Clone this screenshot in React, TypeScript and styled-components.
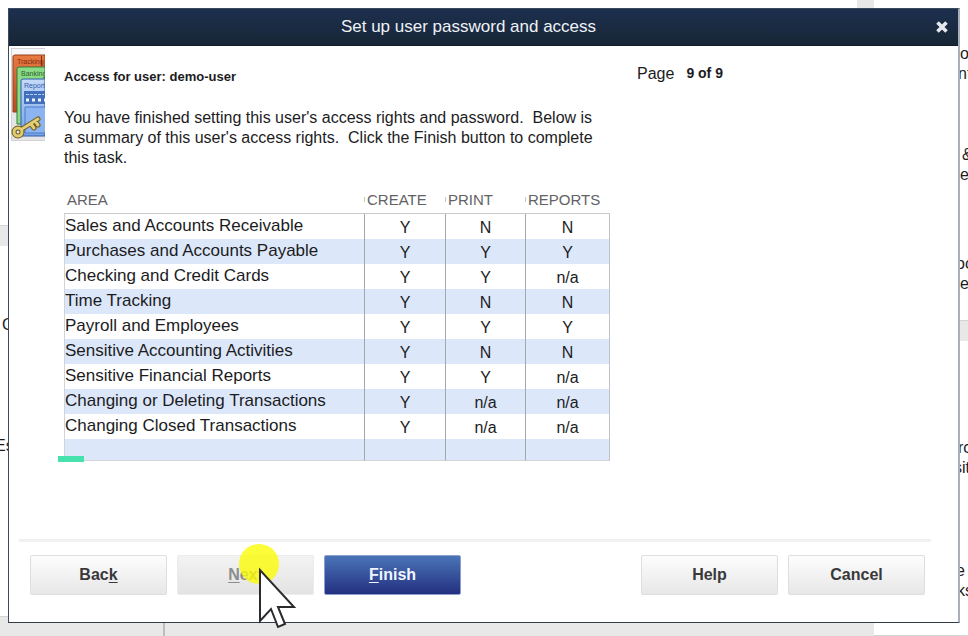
import React from "react";
import styled, { createGlobalStyle, css } from "styled-components";

const GlobalStyle = createGlobalStyle`
  *, *::before, *::after { box-sizing: border-box; }
  body {
    margin: 0;
    background: #fff;
    color: #1c1c1e;
    font-family: "Liberation Sans", Arial, sans-serif;
    font-size: 16px;
    overflow: hidden;
  }
`;

const Screen = styled.div`
  display: grid;
  grid-template: minmax(100vh, auto) / minmax(0, 1fr);
`;

const Backdrop = styled.div`
  grid-area: 1 / 1;
  display: grid;
  grid-template-columns: minmax(0, 1fr) 94px;
  column-gap: 17px;
  height: 100vh;
  overflow: hidden;
  background: #e8e8e8;
`;

const BackdropColumn = styled.div`
  display: flex;
  flex-direction: column;
  gap: 20px;
  min-height: 0;
  overflow: hidden;
`;

const Panel = styled.section<{ $height?: number; $edge?: "left" | "right" }>`
  flex: ${(p) => (p.$height ? `0 0 ${p.$height}px` : "1")};
  border-bottom: 1px solid #d4d4d4;
  background: #fff;
  overflow: hidden;
  display: flex;
  flex-direction: column;
  white-space: nowrap;
  line-height: 20px;
  padding-left: ${(p) => (p.$edge === "right" ? 85 : 0)}px;
`;

const Snippet = styled.p<{ $top: number; $indent?: number }>`
  margin: ${(p) => p.$top}px 0 0;
  text-indent: ${(p) => p.$indent ?? 0}px;
`;

const TaskStrip = styled.div`
  flex: 0 0 19px;
  margin-top: -20px;
  display: grid;
  grid-template-columns: 165px 1fr;

  & > span:first-child { border-right: 2px solid #bdbdbd; }
`;

const Dialog = styled.main`
  grid-area: 1 / 1;
  z-index: 1;
  display: flex;
  flex-direction: column;
  margin: 8px 8px 13px 8px;
  border: 1px solid #3d4a5e;
  border-right: 2px solid #a9afb9;
  border-bottom-color: #343b4b;
  background: #fff;
`;

const TitleBar = styled.header`
  display: grid;
  grid-template-columns: 36px 1fr 36px;
  align-items: center;
  height: 37px;
  background: linear-gradient(#1c2f4e, #182636);
  border-bottom: 1px solid #101c2b;
  color: #eef2f7;
`;

const Title = styled.h1`
  grid-column: 2;
  margin: 0;
  padding-right: 30px;
  text-align: center;
  font-size: 17px;
  font-weight: 400;
`;

const CloseButton = styled.button`
  display: grid;
  place-items: center;
  width: 36px;
  height: 32px;
  padding: 0 0 0 4px;
  border: 0;
  background: none;
  color: #e6eaf0;
`;

const Body = styled.div`
  flex: 1;
  display: grid;
  grid-template-columns: 36px 546px minmax(0, 1fr);
  column-gap: 19px;
`;

const Illustration = styled.svg`
  display: block;
  margin: 2px 0 0 2px;
`;

const Content = styled.section`
  padding-top: 21px;
`;

const UserHeading = styled.h2`
  margin: 0 0 21px;
  font-size: 13px;
  line-height: 20px;
`;

const Summary = styled.p`
  margin: 0 -6px 21px 0;
  line-height: 20px;
  white-space: pre-line;
`;

const PageCount = styled.p`
  display: flex;
  gap: 12px;
  margin: 17px 0 0 8px;
  line-height: 22px;

  strong { font-size: 14px; line-height: 20px; }
`;

const Table = styled.table`
  width: 100%;
  table-layout: fixed;
  border-collapse: separate;
  border-spacing: 0;
  font-size: 17px;
`;

const Th = styled.th<{ $width?: number }>`
  width: ${(p) => (p.$width ? `${p.$width}px` : "auto")};
  height: 25px;
  padding: 2px 0 5px 3px;
  border-bottom: 1px solid #c9c9c9;
  color: #626266;
  font-size: 15px;
  font-weight: 400;
  line-height: 16px;
  text-align: left;
  background: ${(p) =>
    p.$width
      ? "linear-gradient(#c8c8c8, #c8c8c8) 0 8px / 1px 5px no-repeat"
      : "none"};
`;

const Tr = styled.tr`
  height: 25px;
  &:nth-child(even) { background: #dce8fa; }
  &:last-child { height: 22px; }
  &:last-child td { border-bottom: 1px solid #d3d3d8; }
`;

const cell = css`
  padding: 0 1px;
  border-left: 1px solid #a3a7ae;
  line-height: 20px;
`;

const AreaCell = styled.td`
  ${cell}
  padding: 0 0 2px;
  border-left-color: #d0d3d8;
  white-space: nowrap;
`;

const FlagCell = styled.td`
  ${cell}
  padding-top: 2px;
  font-size: 16px;
  text-align: center;
  &:last-child { border-right: 1px solid #bfc2c8; }
`;

const Marker = styled.div`
  position: relative;
  width: 26px;
  height: 6px;
  margin: -5px 0 0 -6px;
  background: #45e2ae;
`;

const Footer = styled.footer`
  display: flex;
  gap: 10px;
  margin: 0 27px 0 10px;
  padding: 13px 6px 27px 11px;
  border-top: 3px solid #f1f1f1;
`;

const Button = styled.button<{ $primary?: boolean }>`
  flex: 0 1 137px;
  height: 40px;
  padding: 0;
  border: 1px solid ${(p) => (p.$primary ? "#8a9fd0" : "#dedede")};
  border-radius: 2px;
  background: ${(p) =>
    p.$primary
      ? "linear-gradient(#4a74b8, #243080)"
      : "linear-gradient(#fdfdfd, #e7e7e7)"};
  color: ${(p) => (p.$primary ? "#f2f5ff" : "#39393c")};
  font: bold 16px/20px "Liberation Sans", Arial, sans-serif;
  text-underline-offset: 2px;

  &:disabled {
    border-color: #ececec;
    background: linear-gradient(#f3f3f3, #e3e3e3);
    color: #8c8c8c;
  }
`;

const Spacer = styled.span`
  flex: 1;
`;

const ButtonSlot = styled.span`
  position: relative;
  display: flex;
  flex: 0 1 137px;
  & > button { flex: 1; }
`;

const Pointer = styled.svg`
  position: absolute;
  left: 60px;
  top: -12px;
  pointer-events: none;
`;

const PermissionsArt = () => (
  <Illustration width="34" height="93" viewBox="0 0 34 93" aria-hidden="true">
    <defs>
      <linearGradient id="sheet" x1="0" y1="0" x2="0" y2="1">
        <stop offset="0" stopColor="#c5dafa" />
        <stop offset="1" stopColor="#75a2e6" />
      </linearGradient>
      <linearGradient id="rust" x1="0" y1="0" x2="0" y2="1">
        <stop offset="0" stopColor="#e97a43" />
        <stop offset="1" stopColor="#b84a21" />
      </linearGradient>
    </defs>
    <rect x="0.5" y="0.5" width="40" height="92" fill="#e5e5e8" stroke="#d2d2d6" />
    <rect x="1" y="1" width="33" height="6" fill="#f7f7f9" />
    <path d="M2 64V9Q2 7 4 7H34V64Z" fill="url(#rust)" stroke="#98401d" />
    <path d="M30.5 8V17" stroke="#7b3215" />
    <path d="M6 76V21Q6 19 8 19H34V76Z" fill="#8bdb84" stroke="#367b3b" />
    <path d="M10 88V33Q10 31 12 31H34V88Z" fill="url(#sheet)" stroke="#2d5da9" />
    <rect x="13" y="43" width="21" height="13" fill="#426fbb" />
    <path d="M15 46.5H33" stroke="#b5cff6" strokeDasharray="3 1" />
    <path d="M15 52H34" stroke="#eef5ff" strokeWidth="3" strokeDasharray="3 3" />
    <path d="M34 59H14V85H34" fill="#8cb4f1" stroke="#4a7bc9" />
    <g fontFamily="Liberation Sans, sans-serif" fontSize="7">
      <text x="6" y="16" fill="#7f2d12">Tracking</text>
      <text x="10" y="28" fill="#286030">Banking</text>
      <text x="13" y="40" fill="#315fac">Reports</text>
    </g>
    <g fill="none" strokeLinecap="round" strokeLinejoin="round">
      <g stroke="#6a581e">
        <circle cx="7" cy="84" r="4" strokeWidth="5" />
        <path d="M11 81L27 71M20 76l3 4M24 73l3 4" strokeWidth="5" />
      </g>
      <g stroke="#e3cd72">
        <circle cx="7" cy="84" r="4" strokeWidth="3" />
        <path d="M11 81L27 71M20 76l3 4M24 73l3 4" strokeWidth="3" />
      </g>
    </g>
  </Illustration>
);

const rows: [string, string, string, string][] = [
  ["Sales and Accounts Receivable", "Y", "N", "N"],
  ["Purchases and Accounts Payable", "Y", "Y", "Y"],
  ["Checking and Credit Cards", "Y", "Y", "n/a"],
  ["Time Tracking", "Y", "N", "N"],
  ["Payroll and Employees", "Y", "Y", "Y"],
  ["Sensitive Accounting Activities", "Y", "N", "N"],
  ["Sensitive Financial Reports", "Y", "Y", "n/a"],
  ["Changing or Deleting Transactions", "Y", "n/a", "n/a"],
  ["Changing Closed Transactions", "Y", "n/a", "n/a"],
  ["", "", "", ""],
];

export default function App() {
  return (
    <>
      <GlobalStyle />
      <Screen>
        <Backdrop aria-hidden="true">
          <BackdropColumn>
            <Panel $height={226} />
            <Panel>
              <Snippet $top={69} $indent={2}>C</Snippet>
              <Snippet $top={101} $indent={-5}>Es</Snippet>
            </Panel>
            <TaskStrip>
              <span />
              <span />
            </TaskStrip>
          </BackdropColumn>
          <BackdropColumn>
            <Panel $height={321} $edge="right">
              <Snippet $top={44} $indent={1}>o</Snippet>
              <Snippet $top={0} $indent={-1}>nt</Snippet>
              <Snippet $top={61} $indent={3}>&amp;</Snippet>
              <Snippet $top={0} $indent={1}>e</Snippet>
              <Snippet $top={69} $indent={-3}>oc</Snippet>
              <Snippet $top={0} $indent={1}>e</Snippet>
            </Panel>
            <Panel $edge="right">
              <Snippet $top={97} $indent={-1}>rc</Snippet>
              <Snippet $top={0} $indent={-5}>sit</Snippet>
              <Snippet $top={83} $indent={-3}>e</Snippet>
              <Snippet $top={0} $indent={-2}>ks</Snippet>
            </Panel>
          </BackdropColumn>
        </Backdrop>

        <Dialog role="dialog" aria-labelledby="dialog-title">
          <TitleBar>
            <Title id="dialog-title">Set up user password and access</Title>
            <CloseButton type="button" aria-label="Close">
              <svg width="12" height="12" viewBox="0 0 12 12">
                <path d="M1.5 1.5L10.5 10.5M10.5 1.5L1.5 10.5" stroke="currentColor" strokeWidth="3.6" />
              </svg>
            </CloseButton>
          </TitleBar>

          <Body>
            <PermissionsArt />
            <Content>
              <UserHeading>Access for user: demo-user</UserHeading>
              <Summary>
                You have finished setting this user's access rights and password.&nbsp; Below is
                {"\n"}a summary of this user's access rights.&nbsp; Click the Finish button to complete
                {"\n"}this task.
              </Summary>
              <Table>
                <thead>
                  <tr>
                    <Th scope="col">AREA</Th>
                    <Th scope="col" $width={81}>CREATE</Th>
                    <Th scope="col" $width={80}>PRINT</Th>
                    <Th scope="col" $width={85}>REPORTS</Th>
                  </tr>
                </thead>
                <tbody>
                  {rows.map(([area, ...flags]) => (
                    <Tr key={area}>
                      <AreaCell>{area}</AreaCell>
                      {flags.map((flag, i) => (
                        <FlagCell key={i}>{flag}</FlagCell>
                      ))}
                    </Tr>
                  ))}
                </tbody>
              </Table>
              <Marker />
            </Content>
            <PageCount>
              Page <strong>9 of 9</strong>
            </PageCount>
          </Body>

          <Footer>
            <Button type="button">Bac<u>k</u></Button>
            <ButtonSlot>
              <Button type="button" disabled><u>N</u>ext</Button>
              <Pointer width="60" height="88" viewBox="0 0 60 88" aria-hidden="true">
                <circle cx="22" cy="21" r="20" fill="#fbfb00" fillOpacity="0.78" />
                <path
                  d="M23 27V78L34 66L41 84L48 81L41 64H57Z"
                  fill="#fff"
                  stroke="#2b2b2f"
                  strokeWidth="2"
                />
              </Pointer>
            </ButtonSlot>
            <Button type="button" $primary><u>F</u>inish</Button>
            <Spacer />
            <Button type="button">Help</Button>
            <Button type="button">Cancel</Button>
          </Footer>
        </Dialog>
      </Screen>
    </>
  );
}
